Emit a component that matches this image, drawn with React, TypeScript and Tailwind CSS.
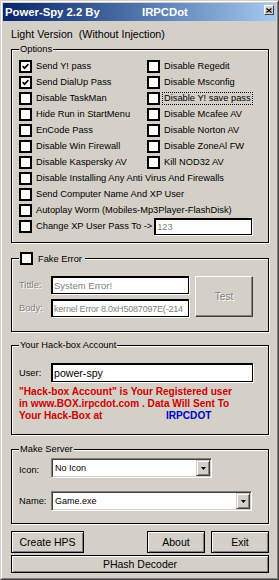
import React from "react";

const FONT = "font-['Liberation_Sans',Arial,sans-serif]";

const CheckMark = () => (
  <svg width="7" height="7" viewBox="0 0 7 7" className="block">
    <path d="M0.6 3.2 L2.6 5.2 L6.4 1.2" fill="none" stroke="#000" strokeWidth="1.7" />
  </svg>
);

const CheckBox: React.FC<{ checked?: boolean }> = ({ checked }) => (
  <span className="flex items-center justify-center w-[13px] h-[13px] shrink-0 border-2 border-black bg-white">
    {checked && <CheckMark />}
  </span>
);

interface CheckRowProps {
  label: string;
  checked?: boolean;
  focused?: boolean;
}

const CheckRow: React.FC<CheckRowProps> = ({ label, checked, focused }) => (
  <div className="flex items-center h-[16px] whitespace-nowrap">
    <CheckBox checked={checked} />
    {focused ? (
      <span className="ml-[2px] px-[1px] leading-[11px] border border-dotted border-black">{label}</span>
    ) : (
      <span className="ml-[4px]">{label}</span>
    )}
  </div>
);

interface GroupBoxProps {
  label: React.ReactNode;
  className?: string;
  children: React.ReactNode;
}

const GroupBox: React.FC<GroupBoxProps> = ({ label, className = "", children }) => (
  <div
    className={`relative ml-[8px] w-[258px] border border-black shadow-[inset_1px_1px_0_#fff,1px_1px_0_#fff] ${className}`}
  >
    <div className="absolute left-[7px] -top-[7px] px-[1px] bg-[#d4d0c8] leading-[12px]">{label}</div>
    {children}
  </div>
);

const TextBox: React.FC<{ className?: string; children?: React.ReactNode }> = ({ className = "", children }) => (
  <div
    className={`flex items-center bg-white border-black border-t-2 border-l-2 border-b border-r shadow-[1px_1px_0_#fff] overflow-hidden whitespace-nowrap pl-[1px] ${className}`}
  >
    {children}
  </div>
);

const Button: React.FC<{ className?: string; children: React.ReactNode }> = ({ className = "", children }) => (
  <div
    className={`flex items-center justify-center border border-black bg-[#d4d0c8] shadow-[inset_1px_1px_0_#fff,inset_-1px_-1px_0_#808080] text-[10.5px] ${className}`}
  >
    {children}
  </div>
);

const Combo: React.FC<{ value: string; className?: string }> = ({ value, className = "" }) => (
  <div
    className={`flex items-stretch bg-white border border-t-[#808080] border-l-[#808080] border-b-white border-r-white shadow-[inset_1px_1px_0_#404040,inset_-1px_-1px_0_#d4d0c8] p-[1px] ${className}`}
  >
    <div className="flex-1 flex items-center pl-[2px] text-[9px] whitespace-nowrap">{value}</div>
    <div className="w-[14px] flex items-center justify-center bg-[#d4d0c8] border border-t-[#d4d0c8] border-l-[#d4d0c8] border-b-[#404040] border-r-[#404040] shadow-[inset_1px_1px_0_#fff,inset_-1px_-1px_0_#808080]">
      <svg width="5" height="3" viewBox="0 0 5 3" className="block">
        <path d="M0 0 H5 L2.5 3 Z" fill="#000" />
      </svg>
    </div>
  </div>
);

const disabledText = "text-[#808080] [text-shadow:1px_1px_0_#fff]";

export default function App() {
  return (
    <div
      className={`w-[279px] h-[580px] bg-[#d4d0c8] text-black text-[9.3px] leading-[12px] ${FONT} border border-t-[#d4d0c8] border-l-[#d4d0c8] border-r-[#404040] border-b-[#404040]`}
    >
      <div className="h-full flex flex-col border border-t-white border-l-white border-r-[#808080] border-b-[#808080] p-[1px]">
        {/* title bar */}
        <div className="h-[18px] flex items-start bg-linear-to-r from-[#0a246a] to-[#a6caf0] text-white font-bold text-[11.3px]">
          <div className="flex items-center h-full pl-[2px] whitespace-nowrap">
            <span className="w-[137px]">Power-Spy 2.2 By</span>
            <span>IRPCDot</span>
          </div>
          <div className="ml-auto mr-[2px] mt-[2px] w-[10px] h-[10px] flex items-center justify-center bg-[#d4d0c8] border border-t-white border-l-white border-b-[#404040] border-r-[#404040]">
            <svg width="6" height="5" viewBox="0 0 6 5" className="block">
              <path d="M0.5 0.5 L5.5 4.5 M5.5 0.5 L0.5 4.5" stroke="#000" strokeWidth="1.2" />
            </svg>
          </div>
        </div>

        <div className="mt-[7px] ml-[8px] text-[10.7px] whitespace-pre">Light Version  (Without Injection)</div>

        <GroupBox label="Options" className="mt-[9px] h-[194px]">
          <div className="pt-[8px] pl-[7px]">
            <div className="grid grid-cols-[128px_1fr]">
              <CheckRow label="Send Y! pass" checked />
              <CheckRow label="Disable Regedit" />
              <CheckRow label="Send DialUp Pass" checked />
              <CheckRow label="Disable Msconfig" />
              <CheckRow label="Disable TaskMan" />
              <CheckRow label="Disable Y! save pass" focused />
              <CheckRow label="Hide Run in StartMenu" />
              <CheckRow label="Disable Mcafee AV" />
              <CheckRow label="EnCode Pass" />
              <CheckRow label="Disable Norton AV" />
              <CheckRow label="Disable Win Firewall" />
              <CheckRow label="Disable ZoneAl FW" />
              <CheckRow label="Disable Kaspersky AV" />
              <CheckRow label="Kill NOD32 AV" />
            </div>
            <CheckRow label="Disable Installing Any Anti Virus And Firewalls" />
            <CheckRow label="Send Computer Name And XP User" />
            <CheckRow label="Autoplay Worm (Mobiles-Mp3Player-FlashDisk)" />
            <div className="flex items-center h-[16px] whitespace-nowrap">
              <CheckBox />
              <span className="ml-[4px]">Change XP User Pass To -&gt;</span>
              <TextBox className="ml-[2px] w-[98px] h-[17px] text-[#808080]">123</TextBox>
            </div>
          </div>
        </GroupBox>

        <GroupBox
          className="mt-[15px] h-[74px]"
          label={
            <div className="flex items-center h-[13px] pr-[2px]">
              <CheckBox />
              <span className="ml-[5px]">Fake Error</span>
            </div>
          }
        >
          <div className="pt-[17px] pl-[7px] flex">
            <div className="flex flex-col gap-[5px]">
              <div className="flex items-center">
                <span className={`w-[32px] ${disabledText}`}>Tittle:</span>
                <TextBox className="w-[138px] h-[18px] text-[#808080] text-[9.5px]">System Error!</TextBox>
              </div>
              <div className="flex items-center">
                <span className={`w-[32px] ${disabledText}`}>Body:</span>
                <TextBox className="w-[138px] h-[18px] text-[#808080] text-[9px] tracking-[-0.2px]">
                  kernel Error 8.0xH5087097E(-214
                </TextBox>
              </div>
            </div>
            <div
              className={`ml-[6px] w-[58px] h-[41px] flex items-center justify-center border border-t-white border-l-white border-b-[#404040] border-r-[#404040] shadow-[inset_-1px_-1px_0_#808080] text-[10px] ${disabledText}`}
            >
              Test
            </div>
          </div>
        </GroupBox>

        <GroupBox label="Your Hack-box Account" className="mt-[13px] h-[90px]">
          <div className="pt-[17px] pl-[7px]">
            <div className="flex items-center">
              <span className="w-[32px]">User:</span>
              <TextBox className="w-[202px] h-[19px] text-[10.6px]">power-spy</TextBox>
            </div>
            <div className="mt-[4px] font-bold text-[10.1px] leading-[12px] text-[#d00000] whitespace-nowrap">
              <div>"Hack-box Account" is Your Registered user</div>
              <div>in www.BOX.irpcdot.com . Data Will Sent To</div>
              <div>
                <span className="inline-block w-[147px]">Your Hack-Box at</span>
                <span className="text-[#0000cc]">IRPCDOT</span>
              </div>
            </div>
          </div>
        </GroupBox>

        <GroupBox label="Make Server" className="mt-[14px] h-[75px]">
          <div className="pt-[8px] pl-[7px]">
            <div className="flex items-center">
              <span className="w-[32px] pt-[3px]">Icon:</span>
              <Combo value="No Icon" className="w-[161px] h-[20px]" />
            </div>
            <div className="flex items-center mt-[13px]">
              <span className="w-[32px]">Name:</span>
              <Combo value="Game.exe" className="w-[201px] h-[20px]" />
            </div>
          </div>
        </GroupBox>

        <div className="mt-[7px] ml-[8px] flex h-[22px]">
          <Button className="w-[73px]">Create HPS</Button>
          <Button className="ml-[63px] w-[58px]">About</Button>
          <Button className="ml-[6px] w-[58px]">Exit</Button>
        </div>
        <Button className="mt-[2px] ml-[8px] w-[258px] h-[18px]">PHash Decoder</Button>
      </div>
    </div>
  );
}
